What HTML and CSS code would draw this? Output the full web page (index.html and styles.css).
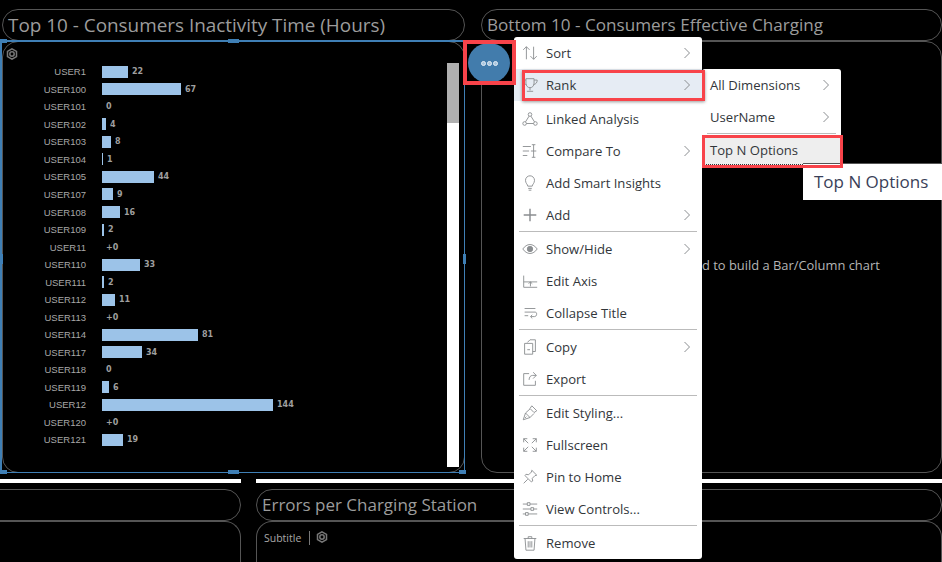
FILE: index.html
```html
<!DOCTYPE html>

<html lang="en">
<head>

<title>Story page</title>
<meta charset="utf-8">

<link rel="stylesheet" href="styles.css">

</head>
<body>

<div class="page">

	<div class="row row-top">
		<section class="tile tile-a">
			<h2 class="tile-title">Top 10 - Consumers Inactivity Time (Hours)</h2>
			<div class="tile-body">
				<svg class="cube cube-a" viewBox="0 0 12 12"><path d="M6 .8l4.500 2.600v5.200L6 11.200 1.500 8.600V3.400z"/><circle cx="6" cy="6" r="2.200"/></svg>
				<ul class="chart">
					<li><span class="lbl">USER1</span><i class="bar" style="width:26px"></i><b>22</b></li>
					<li><span class="lbl">USER100</span><i class="bar" style="width:79px"></i><b>67</b></li>
					<li><span class="lbl">USER101</span><i class="bar" style="width:0"></i><b>0</b></li>
					<li><span class="lbl">USER102</span><i class="bar" style="width:4px"></i><b>4</b></li>
					<li><span class="lbl">USER103</span><i class="bar" style="width:9px"></i><b>8</b></li>
					<li><span class="lbl">USER104</span><i class="bar" style="width:1px"></i><b>1</b></li>
					<li><span class="lbl">USER105</span><i class="bar" style="width:52px"></i><b>44</b></li>
					<li><span class="lbl">USER107</span><i class="bar" style="width:11px"></i><b>9</b></li>
					<li><span class="lbl">USER108</span><i class="bar" style="width:18px"></i><b>16</b></li>
					<li><span class="lbl">USER109</span><i class="bar" style="width:2px"></i><b>2</b></li>
					<li><span class="lbl">USER11</span><i class="bar" style="width:0"></i><b>+0</b></li>
					<li><span class="lbl">USER110</span><i class="bar" style="width:38px"></i><b>33</b></li>
					<li><span class="lbl">USER111</span><i class="bar" style="width:2px"></i><b>2</b></li>
					<li><span class="lbl">USER112</span><i class="bar" style="width:13px"></i><b>11</b></li>
					<li><span class="lbl">USER113</span><i class="bar" style="width:0"></i><b>+0</b></li>
					<li><span class="lbl">USER114</span><i class="bar" style="width:96px"></i><b>81</b></li>
					<li><span class="lbl">USER117</span><i class="bar" style="width:40px"></i><b>34</b></li>
					<li><span class="lbl">USER118</span><i class="bar" style="width:0"></i><b>0</b></li>
					<li><span class="lbl">USER119</span><i class="bar" style="width:7px"></i><b>6</b></li>
					<li><span class="lbl">USER12</span><i class="bar" style="width:171px"></i><b>144</b></li>
					<li><span class="lbl">USER120</span><i class="bar" style="width:0"></i><b>+0</b></li>
					<li><span class="lbl">USER121</span><i class="bar" style="width:21px"></i><b>19</b></li>
				</ul>
				<div class="scrollbar"><div class="thumb"></div></div>
			</div>
		</section>
		<section class="tile tile-b">
			<h2 class="tile-title">Bottom 10 - Consumers Effective Charging</h2>
			<div class="tile-body body-msg">
				<p class="hint">d to build a Bar/Column chart</p>
			</div>
		</section>
	</div>

	<div class="rules">
		<div class="rule rule-a"></div>
		<div class="rule rule-b"></div>
	</div>

	<div class="row row-bottom">
		<section class="tile tile-c">
			<h2 class="tile-title">&nbsp;</h2>
			<div class="tile-body"></div>
		</section>
		<section class="tile tile-d">
			<h2 class="tile-title">Errors per Charging Station</h2>
			<div class="tile-body body-sub">
				<span class="subtitle">Subtitle</span>
				<svg class="cube" viewBox="0 0 12 12"><path d="M6 .8l4.500 2.600v5.200L6 11.200 1.500 8.600V3.400z"/><circle cx="6" cy="6" r="2.200"/></svg>
			</div>
		</section>
	</div>

</div>

<!-- selection frame of the first tile -->
<div class="sel">
	<i class="hd hd-tl"></i><i class="hd hd-tm"></i><i class="hd hd-ml"></i><i class="hd hd-mr"></i>
	<i class="hd hd-bl"></i><i class="hd hd-bm"></i><i class="hd hd-br"></i>
</div>

<button class="more"><i></i><i></i><i></i></button>

<ul class="menu menu-main">
	<li><svg viewBox="0 0 20 20"><path d="M6 17V3M2.500 6.500L6 3l3.500 3.500M14 3v14M10.500 13.500L14 17l3.500-3.500"/></svg>Sort<svg class="chev" viewBox="0 0 8 12"><path d="M1.500 1l5 5-5 5"/></svg></li>
	<li class="on gap"><svg viewBox="0 0 20 20"><path d="M5.500 3h9v5c0 3-2 5-4.500 5s-4.500-2-4.500-5zM5.500 4.500H2c0 3 1.500 4.500 4 5M14.500 4.500H18c0 3-1.500 4.500-4 5M10 13v3M6.500 17h7"/></svg>Rank<svg class="chev" viewBox="0 0 8 12"><path d="M1.500 1l5 5-5 5"/></svg></li>
	<li><svg viewBox="0 0 20 20"><circle cx="10" cy="5" r="2"/><circle cx="4" cy="15" r="2"/><circle cx="16" cy="15" r="2"/><path d="M9 6.800L5 13.200M11 6.800l4 6.400M6 15h8"/></svg>Linked Analysis</li>
	<li><svg viewBox="0 0 20 20"><path d="M2 5h9M2 10h7M2 15h5M14 3v14M11 10h6M12 17h4M12 3h4"/></svg>Compare To<svg class="chev" viewBox="0 0 8 12"><path d="M1.500 1l5 5-5 5"/></svg></li>
	<li><svg viewBox="0 0 20 20"><path d="M7.500 13.500c0-2-2.500-3-2.500-6.500a5 5 0 0 1 10 0c0 3.500-2.500 4.500-2.500 6.500zM8 16h4M8.500 18h3"/></svg>Add Smart Insights</li>
	<li class="sep"><svg viewBox="0 0 20 20"><path class="thick" d="M10 3v14M3 10h14"/></svg>Add<svg class="chev" viewBox="0 0 8 12"><path d="M1.500 1l5 5-5 5"/></svg></li>
	<li><svg viewBox="0 0 20 20"><path d="M2 10c2-3 5-5 8-5s6 2 8 5c-2 3-5 5-8 5s-6-2-8-5z"/><circle class="solid" cx="10" cy="10" r="3"/></svg>Show/Hide<svg class="chev" viewBox="0 0 8 12"><path d="M1.500 1l5 5-5 5"/></svg></li>
	<li><svg viewBox="0 0 20 20"><path d="M3 4v13h15M3 11h15M10.500 16v-5M8.500 13l2-2 2 2"/></svg>Edit Axis</li>
	<li class="sep"><svg viewBox="0 0 20 20"><path d="M4 5h12M4 9h12c2 0 2 5-1 5h-4M12.500 12L10.500 14l2 2M4 13h4"/></svg>Collapse Title</li>
	<li><svg viewBox="0 0 20 20"><path d="M7 5l3-3h6v13h-3M4 6h9v12H4zM7 13h3"/></svg>Copy<svg class="chev" viewBox="0 0 8 12"><path d="M1.500 1l5 5-5 5"/></svg></li>
	<li class="sep"><svg viewBox="0 0 20 20"><path d="M9 4H3v13h13v-5M17 6l-3.500-3.500M17 6l-3.500 3.500M17 6h-4c-2.500 0-4 2-4 5"/></svg>Export</li>
	<li><svg viewBox="0 0 20 20"><path d="M12 2l5.500 5.500-3 2-4.500-4.500zM10 5.500L5 10l5 5 4.500-4.500M5 10l-2.500 7.500L10 15M6 14l-1.500 1.500"/></svg>Edit Styling...</li>
	<li><svg viewBox="0 0 20 20"><path d="M3 3l5 5M3 7V3h4M17 3l-5 5M17 7V3h-4M3 17l5-5M3 13v4h4M17 17l-5-5M17 13v4h-4"/></svg>Fullscreen</li>
	<li><svg viewBox="0 0 20 20"><path d="M12 2.500l5.500 5.500-2 .5-3 3 .5 3-1.500 1-7-7 1-1.500 3 .5 3-3zM7.500 12.500L3 17"/></svg>Pin to Home</li>
	<li class="sep"><svg viewBox="0 0 20 20"><path d="M2 4.500h5M10 4.500h8M2 10h9M14 10h4M2 15.500h3M8 15.500h10M7 3h3v3H7zM11 8.500h3v3h-3zM5 14h3v3H5z"/></svg>View Controls...</li>
	<li><svg viewBox="0 0 20 20"><path d="M3 5h14M8 5V3h4v2M4.500 5l1 13h9l1-13M8 8v7M10 8v7M12 8v7"/></svg>Remove</li>
</ul>

<ul class="menu menu-sub">
	<li>All Dimensions<svg class="chev" viewBox="0 0 8 12"><path d="M1.500 1l5 5-5 5"/></svg></li>
	<li class="sep">UserName<svg class="chev" viewBox="0 0 8 12"><path d="M1.500 1l5 5-5 5"/></svg></li>
	<li class="focus">Top N Options</li>
</ul>

<div class="tooltip">Top N Options</div>

<!-- red annotation boxes from the screenshot -->
<div class="mark mark-more"></div>
<div class="mark mark-rank"></div>
<div class="mark mark-top"></div>

</body>
</html>
```

FILE: styles.css
```css
html, body {
	height: 100%;
	margin: 0;
	padding: 0;
	background: #000;
	overflow: hidden;
	font-family: "Open Sans", "Liberation Sans", sans-serif;
}

ul, li {
	margin: 0;
	padding: 0;
	list-style-type: none;
}

.page {
	width: 942px;
	height: 562px;
	padding-top: 9px;
	box-sizing: border-box;
	overflow: hidden;
}

.row {
	display: flex;
}

.row-top {
	gap: 16px;
	padding-left: 2px;
	height: 464px;
}

.row-bottom {
	gap: 15px;
	margin-left: -40px;
	margin-top: 6px;
}

.tile {
	display: flex;
	flex: none;
	flex-direction: column;
}

.tile-a { width: 463px; }
.tile-b { width: 461px; }
.tile-c { width: 281px; }
.tile-d { width: 686px; }

.tile-title {
	margin: 0;
	height: 32px;
	box-sizing: border-box;
	border: 1px solid #555;
	border-radius: 16px;
	padding-left: 5px;
	font-size: 17.100px;
	font-weight: 400;
	line-height: 30px;
	color: #9c9c9c;
	white-space: nowrap;
}

.tile-a .tile-title {
	font-size: 18.900px;
}

.tile-d .tile-title {
	font-size: 17px;
}

.tile-body {
	position: relative;
	flex: 1;
	box-sizing: border-box;
	border: 1px solid #555;
	border-radius: 16px;
}

.row-bottom .tile-body {
	height: 41px;
	flex: none;
	border-bottom: 0;
	border-radius: 16px 16px 0 0;
}

.cube {
	width: 12px;
	height: 12px;
	fill: none;
	stroke: #777;
	stroke-width: 1.500;
}

.cube-a {
	position: absolute;
	left: 3px;
	top: 6px;
}

/* chart */

.chart {
	padding-top: 21px;
}

.chart li {
	display: flex;
	align-items: center;
	height: 17.540px;
}

.lbl {
	width: 83px;
	margin-right: 16px;
	text-align: right;
	font-family: "Liberation Sans", sans-serif;
	font-size: 9.500px;
	color: #a8a8a8;
}

.bar {
	display: block;
	height: 12px;
	background: #9cc3e8;
}

.chart b {
	margin-left: 4px;
	font-family: "DejaVu Sans", sans-serif;
	font-size: 8px;
	color: #9f9f9f;
}

.scrollbar {
	position: absolute;
	left: 444px;
	top: 21px;
	width: 12px;
	height: 404px;
	background: #fff;
}

.thumb {
	height: 60px;
	background: #b0b0b0;
}

/* other tiles */

.body-msg {
	padding: 214px 0 0 220px;
}

.hint {
	margin: 0;
	font-size: 12.900px;
	line-height: 18px;
	color: #b5b5b5;
	white-space: nowrap;
}

.body-sub {
	display: flex;
	align-items: flex-start;
	padding: 9px 0 0 7px;
}

.subtitle {
	padding-right: 8px;
	margin-right: 6px;
	border-right: 1px solid #777;
	font-size: 10.500px;
	line-height: 14px;
	color: #a8a8a8;
}

.rules {
	display: flex;
	gap: 15px;
	height: 4px;
	margin-top: 6px;
}

.rule {
	background: #fff;
}

.rule-a { width: 241px; }
.rule-b { flex: 1; }

/* selection frame */

.sel {
	position: absolute;
	left: 0;
	top: 40px;
	width: 465px;
	height: 433px;
	box-sizing: border-box;
	border: 2px solid #3f7fb5;
	border-right-width: 1px;
	border-bottom-width: 1px;
}

.hd {
	position: absolute;
	width: 7px;
	height: 4px;
	background: #3f7fb5;
}

.hd-tl { left: -2px; top: -3px; }
.hd-tm { left: 226px; top: -3px; width: 11px; }
.hd-ml { left: -2px; top: 212px; width: 3px; height: 10px; }
.hd-mr { right: -2px; top: 212px; width: 3px; height: 10px; }
.hd-bl { left: -2px; bottom: -2px; }
.hd-bm { left: 226px; bottom: -2px; width: 11px; }
.hd-br { right: -2px; bottom: -2px; }

/* context menu */

.more {
	position: absolute;
	left: 468px;
	top: 43px;
	width: 42px;
	height: 40px;
	padding: 0;
	border: 0;
	border-radius: 50%;
	background: #427cac;
	display: flex;
	align-items: center;
	justify-content: center;
	gap: 1px;
}

.more i {
	width: 5px;
	height: 5px;
	box-sizing: border-box;
	border: 1px solid #e6eef5;
	border-radius: 50%;
	background: #a9c6de;
}

.menu {
	position: absolute;
	background: #fff;
	border-radius: 3px;
	font-size: 13.100px;
	color: #32363a;
}

.menu li {
	position: relative;
	display: flex;
	align-items: center;
	height: 32px;
	white-space: nowrap;
}

.menu-main {
	left: 514px;
	top: 37px;
	width: 188px;
	height: 522px;
}

.menu-main li {
	padding-left: 32px;
}

.menu-main li > svg:first-child {
	position: absolute;
	left: 7px;
	top: 7px;
	width: 18px;
	height: 18px;
	fill: none;
	stroke: #8a8d90;
	stroke-width: 1;
}

.menu-main li > svg .thick { stroke-width: 1.600; }
.menu-main li > svg .solid { fill: #8a8d90; }

.menu li.gap { margin-bottom: 2px; }

.menu li.sep {
	margin-bottom: 2px;
}

.menu li.sep:after {
	content: '';
	position: absolute;
	left: 5px;
	right: 5px;
	bottom: -1px;
	border-top: 1px solid #bbb;
}

.menu li.on {
	background: #e6ecf4;
}

.chev {
	position: absolute;
	right: 11px;
	top: 10px;
	width: 8px;
	height: 12px;
	fill: none;
	stroke: #8b8e91;
	stroke-width: 1;
}

.menu-sub {
	left: 702px;
	top: 69px;
	width: 139px;
	height: 99px;
}

.menu-sub li {
	padding-left: 8px;
}

.menu-sub li.focus {
	height: 30px;
	padding-top: 1px;
	background: #eee;
	border-bottom: 1px dotted #333;
	box-sizing: border-box;
}

.tooltip {
	position: absolute;
	left: 803px;
	top: 163px;
	width: 139px;
	height: 37px;
	box-sizing: border-box;
	padding-left: 11px;
	background: #fff;
	border-top: 1px solid #555;
	font-size: 17px;
	line-height: 36px;
	color: #3a3f58;
	white-space: nowrap;
}

.mark {
	position: absolute;
	box-sizing: border-box;
	border: 3px solid #f8434a;
}

.mark-more {
	left: 463px;
	top: 40px;
	width: 53px;
	height: 45px;
	border-width: 4px;
}

.mark-rank {
	left: 522px;
	top: 70px;
	width: 183px;
	height: 31px;
	box-shadow: 0 1px 3px rgba(0, 0, 0, 0.4);
}

.mark-top {
	left: 702px;
	top: 135px;
	width: 141px;
	height: 33px;
}
```
